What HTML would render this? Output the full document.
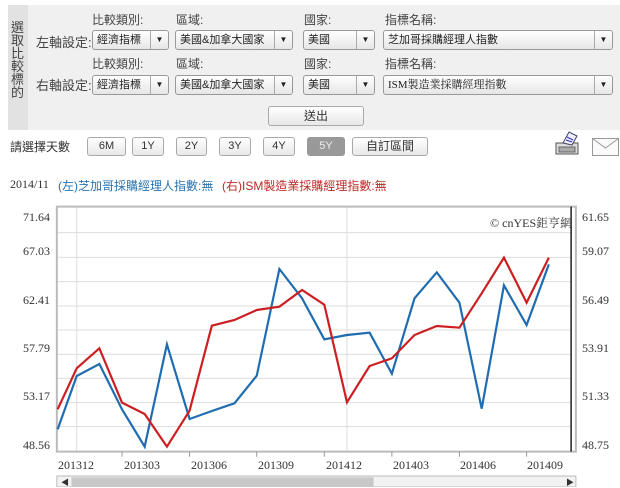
<!DOCTYPE html>
<html><head><meta charset="utf-8">
<style>
*{margin:0;padding:0;box-sizing:border-box}
body{width:620px;height:487px;overflow:hidden;background:#fff;font-family:"Liberation Sans","Noto Sans CJK TC",sans-serif;font-size:12px;color:#333;position:relative}
.a{position:absolute;white-space:nowrap}
.sel{position:absolute;height:20px;border:1px solid #999;border-radius:3px;background:linear-gradient(#fff,#e6e6e6);font-size:11px;line-height:18px;padding-left:4px;color:#222;overflow:hidden;white-space:nowrap}
.sel .ar{position:absolute;right:0;top:0;width:18px;height:18px;border-left:1px solid #aaa;text-align:center;font-size:8px;line-height:18px;background:linear-gradient(#fff,#e6e6e6)}
.btn{position:absolute;top:137px;height:19px;border:1px solid #aaa;border-radius:3px;background:linear-gradient(#fff,#e8e8e8);text-align:center;line-height:17px;font-size:11px;color:#333}
.yl{position:absolute;font-family:"Liberation Serif",serif;font-size:12px;color:#333}
.xl{position:absolute;top:458px;font-family:"Liberation Serif",serif;font-size:12px;color:#333}
</style></head><body>
<div class="a" style="left:8px;top:5px;width:612px;height:125px;background:#f0f0f0"></div>
<div class="a" style="left:8px;top:5px;width:20px;height:125px;background:#e2e2e2"></div>
<div class="a" style="left:11px;top:21px;width:14px;font-size:13px;line-height:13px;white-space:normal;color:#444">選取比較標的</div>

<div class="a" style="left:92px;top:11px;color:#444">比較類別:</div>
<div class="a" style="left:176px;top:11px;color:#444">區域:</div>
<div class="a" style="left:304px;top:11px;color:#444">國家:</div>
<div class="a" style="left:385px;top:11px;color:#444">指標名稱:</div>
<div class="a" style="left:36px;top:32px;font-size:13px;color:#444">左軸設定:</div>
<div class="sel" style="left:92px;top:30px;width:77px">經濟指標<span class="ar">▼</span></div>
<div class="sel" style="left:175px;top:30px;width:118px">美國&amp;加拿大國家<span class="ar">▼</span></div>
<div class="sel" style="left:303px;top:30px;width:72px">美國<span class="ar">▼</span></div>
<div class="sel" style="left:383px;top:30px;width:230px">芝加哥採購經理人指數<span class="ar">▼</span></div>

<div class="a" style="left:92px;top:55px;color:#444">比較類別:</div>
<div class="a" style="left:176px;top:55px;color:#444">區域:</div>
<div class="a" style="left:304px;top:55px;color:#444">國家:</div>
<div class="a" style="left:385px;top:55px;color:#444">指標名稱:</div>
<div class="a" style="left:36px;top:75px;font-size:13px;color:#444">右軸設定:</div>
<div class="sel" style="left:92px;top:75px;width:77px">經濟指標<span class="ar">▼</span></div>
<div class="sel" style="left:175px;top:75px;width:118px">美國&amp;加拿大國家<span class="ar">▼</span></div>
<div class="sel" style="left:303px;top:75px;width:72px">美國<span class="ar">▼</span></div>
<div class="sel" style="left:383px;top:75px;width:230px;font-family:'Liberation Serif','Noto Serif CJK SC',serif">ISM製造業採購經理指數<span class="ar">▼</span></div>

<div class="btn" style="left:268px;top:106px;width:96px;height:20px;line-height:18px;font-size:12px">送出</div>

<div class="a" style="left:10px;top:138px;font-size:12px;color:#333">請選擇天數</div>
<div class="btn" style="left:87px;width:39px">6M</div>
<div class="btn" style="left:132px;width:32px">1Y</div>
<div class="btn" style="left:176px;width:31px">2Y</div>
<div class="btn" style="left:219px;width:32px">3Y</div>
<div class="btn" style="left:263px;width:32px">4Y</div>
<div class="btn" style="left:307px;width:38px;background:#999;border-color:#999;color:#eee">5Y</div>
<div class="btn" style="left:352px;width:76px;font-size:12px">自訂區間</div>
<svg class="a" style="left:553px;top:129px" width="30" height="30" viewBox="0 0 30 30">
<rect x="3" y="14" width="22" height="11" fill="#ddd" stroke="#555"/>
<rect x="6" y="18" width="16" height="5" fill="#aaa" stroke="#666"/>
<polygon points="10,14 16,3 24,7 19,16" fill="#eef" stroke="#446"/>
<line x1="14" y1="8" x2="20" y2="11" stroke="#33a"/><line x1="13" y1="11" x2="19" y2="13" stroke="#33a"/>
</svg>
<svg class="a" style="left:592px;top:138px" width="27" height="18" viewBox="0 0 27 18">
<rect x="0.5" y="0.5" width="26" height="17" fill="#fafafa" stroke="#999"/>
<polyline points="0.5,0.5 13.5,10 26.5,0.5" fill="none" stroke="#999"/>
</svg>

<div class="a" style="left:10px;top:177px;font-family:'Liberation Serif',serif;font-size:12px;color:#333">2014/11</div>
<div class="a" style="left:58px;top:177px;color:#2a74b0">(左)芝加哥採購經理人指數:無</div>
<div class="a" style="left:222px;top:177px;color:#c0282a">(右)ISM製造業採購經理指數:無</div>

<svg class="a" style="left:0;top:200px" width="620" height="287" viewBox="0 0 1560 861" preserveAspectRatio="none">
<g stroke="#ddd" stroke-width="1">
<line x1="143" y1="98" x2="1437" y2="98" vector-effect="non-scaling-stroke"/>
<line x1="143" y1="172" x2="1437" y2="172" vector-effect="non-scaling-stroke"/>
<line x1="143" y1="245" x2="1437" y2="245" vector-effect="non-scaling-stroke"/>
<line x1="143" y1="318" x2="1437" y2="318" vector-effect="non-scaling-stroke"/>
<line x1="143" y1="390" x2="1437" y2="390" vector-effect="non-scaling-stroke"/>
<line x1="143" y1="463" x2="1437" y2="463" vector-effect="non-scaling-stroke"/>
<line x1="143" y1="535" x2="1437" y2="535" vector-effect="non-scaling-stroke"/>
<line x1="143" y1="608" x2="1437" y2="608" vector-effect="non-scaling-stroke"/>
<line x1="143" y1="680" x2="1437" y2="680" vector-effect="non-scaling-stroke"/>
<line x1="193" y1="20" x2="193" y2="755" vector-effect="non-scaling-stroke"/>
<line x1="873" y1="20" x2="873" y2="755" vector-effect="non-scaling-stroke"/>
</g>
<rect x="143" y="20" width="1306" height="735" fill="none" stroke="#bbb" stroke-width="2" vector-effect="non-scaling-stroke"/>
<line x1="1437" y1="20" x2="1437" y2="755" stroke="#222" stroke-width="1.5" vector-effect="non-scaling-stroke"/>
<g stroke="#999">
<line x1="307" y1="755" x2="307" y2="770" vector-effect="non-scaling-stroke"/><line x1="477" y1="755" x2="477" y2="770" vector-effect="non-scaling-stroke"/><line x1="646" y1="755" x2="646" y2="770" vector-effect="non-scaling-stroke"/><line x1="816" y1="755" x2="816" y2="770" vector-effect="non-scaling-stroke"/><line x1="986" y1="755" x2="986" y2="770" vector-effect="non-scaling-stroke"/><line x1="1156" y1="755" x2="1156" y2="770" vector-effect="non-scaling-stroke"/><line x1="1325" y1="755" x2="1325" y2="770" vector-effect="non-scaling-stroke"/>
</g>
<polyline fill="none" stroke="#1f6db0" stroke-width="2.2" vector-effect="non-scaling-stroke" points="145,688 193,528 250,492 307,628 364,740 420,433 477,657 533,633 590,610 646,527 703,207 760,295 816,418 873,405 930,398 986,521 1043,295 1099,217 1156,308 1212,626 1268,256 1325,375 1381,193"/>
<polyline fill="none" stroke="#cc1f22" stroke-width="2.2" vector-effect="non-scaling-stroke" points="145,628 193,505 250,445 307,608 364,642 420,740 477,632 533,377 590,360 646,330 703,320 760,270 816,314 873,607 930,498 986,475 1043,405 1099,378 1156,383 1212,280 1268,173 1325,308 1381,173"/>
<rect x="143" y="828" width="1306" height="33" fill="#f2f2f2" stroke="#bbb" vector-effect="non-scaling-stroke"/>
<rect x="180" y="832" width="760" height="29" fill="#c8c8c8"/>
</svg>
<div class="a" style="left:61px;top:477px;font-size:8px;color:#333">◀</div>
<div class="a" style="left:566px;top:477px;font-size:8px;color:#333">▶</div>
<div class="a" style="left:490px;top:214px;font-family:'Liberation Serif','Noto Serif CJK SC',serif;font-size:12px;color:#333">© cnYES鉅亨網</div>

<div class="yl" style="left:23px;top:210px">71.64</div>
<div class="yl" style="left:23px;top:244px">67.03</div>
<div class="yl" style="left:23px;top:293px">62.41</div>
<div class="yl" style="left:23px;top:341px">57.79</div>
<div class="yl" style="left:23px;top:389px">53.17</div>
<div class="yl" style="left:23px;top:438px">48.56</div>
<div class="yl" style="left:582px;top:210px">61.65</div>
<div class="yl" style="left:582px;top:244px">59.07</div>
<div class="yl" style="left:582px;top:293px">56.49</div>
<div class="yl" style="left:582px;top:341px">53.91</div>
<div class="yl" style="left:582px;top:389px">51.33</div>
<div class="yl" style="left:582px;top:438px">48.75</div>

<div class="xl" style="left:58px">201312</div>
<div class="xl" style="left:124px">201303</div>
<div class="xl" style="left:191px">201306</div>
<div class="xl" style="left:258px">201309</div>
<div class="xl" style="left:326px">201412</div>
<div class="xl" style="left:393px">201403</div>
<div class="xl" style="left:460px">201406</div>
<div class="xl" style="left:527px">201409</div>
</body></html>
